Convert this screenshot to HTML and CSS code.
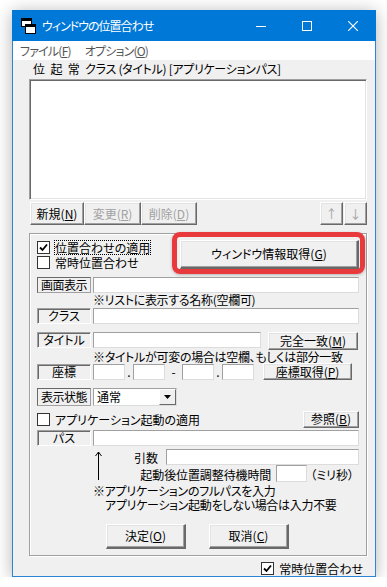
FILE: index.html
```html
<!DOCTYPE html>
<html lang="ja">
<head>
<meta charset="UTF-8">
<meta name="viewport" content="width=device-width, initial-scale=1.0">
<title>ウィンドウの位置合わせ</title>
<link rel="stylesheet" href="styles.css">
</head>
<body>
<div class="window">
    <div class="titlebar">
        <svg class="app-icon" width="15" height="16" viewBox="0 0 15 16">
            <rect x="0.5" y="0.5" width="10" height="8" fill="#fff" stroke="#000"/>
            <rect x="1" y="1" width="9" height="2" fill="#000"/>
            <rect x="4.5" y="6.5" width="10" height="9" fill="#fff" stroke="#000"/>
            <rect x="5" y="7" width="9" height="2" fill="#000"/>
        </svg>
        <span class="title">ウィンドウの位置合わせ</span>
        <div class="caption">
            <span class="cap-btn">
                <svg width="10" height="10" viewBox="0 0 10 10"><path d="M0 5.5h10" stroke="#fff" stroke-width="1"/></svg>
            </span>
            <span class="cap-btn">
                <svg width="10" height="10" viewBox="0 0 10 10"><rect x="0.5" y="0.5" width="9" height="9" fill="none" stroke="#fff"/></svg>
            </span>
            <span class="cap-btn">
                <svg width="10" height="10" viewBox="0 0 10 10"><path d="M0 0L10 10M10 0L0 10" stroke="#fff" stroke-width="1.1"/></svg>
            </span>
        </div>
    </div>

    <div class="menubar">
        <span class="menu-item">ファイル(<u>F</u>)</span>
        <span class="menu-item">オプション(<u>O</u>)</span>
    </div>

    <div class="client">
        <div class="list-head">位&ensp;起&ensp;常&ensp;クラス (タイトル) [アプリケーションパス]</div>
        <div class="listbox"></div>

        <div class="list-btns">
            <button class="btn btn-new">新規(<u>N</u>)</button>
            <button class="btn btn-edit" disabled>変更(<u>R</u>)</button>
            <button class="btn btn-del" disabled>削除(<u>D</u>)</button>
            <span class="spacer"></span>
            <button class="btn btn-arrow" disabled>↑</button>
            <button class="btn btn-arrow" disabled>↓</button>
        </div>

        <div class="group">
            <div class="highlight"></div>

            <div class="row-top">
                <div class="checks">
                    <label class="check"><span class="box checked"><svg width="9" height="9" viewBox="0 0 9 9"><path d="M1 4.5L3.5 7L8 1.5" fill="none" stroke="#000" stroke-width="1.8"/></svg></span><span class="focus">位置合わせの適用</span></label>
                    <label class="check"><span class="box"></span><span>常時位置合わせ</span></label>
                </div>
                <button class="btn btn-get">ウィンドウ情報取得(<u>G</u>)</button>
            </div>

            <div class="row row-disp">
                <span class="lbl lbl-dark">画面表示</span>
                <span class="field grow"></span>
            </div>
            <div class="note">※リストに表示する名称(空欄可)</div>

            <div class="row row-class">
                <span class="lbl">クラス</span>
                <span class="field grow"></span>
            </div>

            <div class="row row-title">
                <span class="lbl">タイトル</span>
                <span class="field field-title"></span>
                <button class="btn btn-match">完全一致(<u>M</u>)</button>
            </div>
            <div class="note note-title">※タイトルが可変の場合は空欄、もしくは部分一致</div>

            <div class="row row-pos">
                <span class="lbl">座標</span>
                <span class="field field-num"></span>
                <span class="sep">.</span>
                <span class="field field-num"></span>
                <span class="sep sep-dash">-</span>
                <span class="field field-num"></span>
                <span class="sep">.</span>
                <span class="field field-num"></span>
                <button class="btn btn-pos">座標取得(<u>P</u>)</button>
            </div>

            <div class="row row-state">
                <span class="lbl lbl-dark">表示状態</span>
                <span class="combo">
                    <span class="combo-text">通常</span>
                    <span class="combo-drop"><svg width="7" height="4" viewBox="0 0 7 4"><path d="M0 0h7L3.5 4z" fill="#000"/></svg></span>
                </span>
            </div>

            <div class="row row-app">
                <label class="check"><span class="box"></span><span>アプリケーション起動の適用</span></label>
                <button class="btn btn-browse">参照(<u>B</u>)</button>
            </div>

            <div class="row row-path">
                <span class="lbl">パス</span>
                <span class="field grow"></span>
            </div>

            <div class="args">
                <svg class="up-arrow" width="9" height="30" viewBox="0 0 9 30">
                    <path d="M4.5 1V29" stroke="#000" stroke-width="1"/>
                    <path d="M1.5 5L4.5 1L7.5 5" fill="none" stroke="#000" stroke-width="1"/>
                </svg>
                <div class="args-rows">
                    <div class="row row-arg">
                        <span class="arg-lbl">引数</span>
                        <span class="field field-arg"></span>
                    </div>
                    <div class="row row-wait">
                        <span class="wait-lbl">起動後位置調整待機時間</span>
                        <span class="field field-wait"></span>
                        <span class="unit">（ミリ秒）</span>
                    </div>
                </div>
            </div>

            <div class="note note-path">※アプリケーションのフルパスを入力</div>
            <div class="note note-path2">アプリケーション起動をしない場合は入力不要</div>

            <div class="row-ok">
                <button class="btn btn-ok">決定(<u>O</u>)</button>
                <button class="btn btn-ok">取消(<u>C</u>)</button>
            </div>
        </div>

        <div class="footer">
            <label class="check"><span class="box checked"><svg width="9" height="9" viewBox="0 0 9 9"><path d="M1 4.5L3.5 7L8 1.5" fill="none" stroke="#000" stroke-width="1.8"/></svg></span><span>常時位置合わせ</span></label>
        </div>
    </div>
</div>
</body>
</html>
```

FILE: styles.css
```css
body {
    margin: 0;
    padding: 0;
    background-color: #fff;
    font-family: "Noto Sans CJK JP", sans-serif;
    font-size: 12px;
    color: #000;
    font-feature-settings: "palt";
}
u {
    text-decoration: underline;
    text-underline-offset: 1px;
}

/* ウィンドウ枠 */
.window {
    margin: 10px 0 0 12px;
    width: 364px;
    height: 567px;
    box-sizing: border-box;
    border: 1px solid #2b87d6;
    border-top: none;
    display: flex;
    flex-direction: column;
    background-color: #f0f0f0;
    box-shadow: 0 2px 16px rgba(0, 0, 0, 0.3);
}
.titlebar {
    height: 31px;
    margin: 0 -1px;
    background-color: #0078d7;
    display: flex;
    align-items: center;
    color: #fff;
}
.app-icon {
    margin-left: 9px;
    margin-top: 1px;
}
.title {
    margin-left: 6px;
    font-size: 12px;
    letter-spacing: -1px;
}
.caption {
    margin-left: auto;
    display: flex;
    height: 100%;
}
.cap-btn {
    width: 46px;
    display: flex;
    align-items: center;
    justify-content: center;
}
.menubar {
    height: 19px;
    background-color: #fff;
    display: flex;
    align-items: center;
    color: #555;
}
.menu-item {
    margin-left: 7px;
    margin-right: 7px;
    letter-spacing: -0.8px;
}

/* クライアント領域 */
.client {
    flex: 1;
    display: flex;
    flex-direction: column;
    padding: 0 8px 0 16px;
}
.list-head {
    height: 19px;
    line-height: 17px;
    padding-left: 4px;
    letter-spacing: -0.3px;
    white-space: pre;
}
.listbox {
    height: 121px;
    box-sizing: border-box;
    background-color: #fff;
    border: 1px solid;
    border-color: #a0a0a0 #fff #fff #a0a0a0;
    box-shadow: inset 1px 1px #696969, inset -1px -1px #e3e3e3;
}
.list-btns {
    display: flex;
    margin-top: 2px;
    height: 23px;
    padding-left: 1px;
}
.spacer {
    flex: 1;
}

/* ボタン */
.btn {
    font: inherit;
    color: #000;
    padding: 0;
    margin: 0;
    background-color: #f0f0f0;
    border: 1px solid;
    border-color: #fff #696969 #696969 #fff;
    box-shadow: inset -1px -1px #a0a0a0, inset 1px 1px #e3e3e3;
    box-sizing: border-box;
    line-height: 1;
    cursor: default;
}
.btn:disabled {
    color: #a0a0a0;
}
.btn-new { width: 54px; }
.btn-edit { width: 57px; }
.btn-del { width: 56px; }
.btn-arrow { width: 23px; margin-left: 1px; }

/* グループ */
.group {
    position: relative;
    margin-top: 8px;
    height: 323px;
    box-sizing: border-box;
    border: 1px solid #a0a0a0;
    box-shadow: inset 1px 1px #fff, 1px 1px #fff;
    padding: 0 7px 0 7px;
    display: flex;
    flex-direction: column;
}
.highlight {
    position: absolute;
    left: 142px;
    top: -2px;
    width: 193px;
    height: 42px;
    box-sizing: border-box;
    border: 5px solid #e8393c;
    border-radius: 8px;
    box-shadow: 0 1px 3px rgba(0, 0, 0, 0.25);
}
.row-top {
    margin-top: 6px;
    height: 30px;
    display: flex;
}
.checks {
    display: flex;
    flex-direction: column;
}
.check {
    display: flex;
    align-items: center;
    height: 15px;
}
.box {
    width: 13px;
    height: 13px;
    box-sizing: border-box;
    border: 1px solid #333;
    background-color: #fff;
    margin-right: 5px;
    display: flex;
    align-items: center;
    justify-content: center;
}
.focus {
    outline: 1px dotted #000;
    outline-offset: 0;
    line-height: 13px;
}
.btn-get {
    margin-left: auto;
    width: 179px;
    height: 29px;
    border-right-width: 2px;
    border-bottom-width: 2px;
}

.row {
    display: flex;
    align-items: flex-start;
}
.lbl {
    width: 54px;
    height: 16px;
    margin-right: 2px;
    box-sizing: border-box;
    border: 1px solid;
    border-color: #a0a0a0 #fff #fff #a0a0a0;
    box-shadow: inset 1px 1px #696969;
    text-align: center;
    line-height: 14px;
    flex-shrink: 0;
}
.lbl-dark {
    border-color: #696969 #a0a0a0 #a0a0a0 #696969;
    box-shadow: none;
    letter-spacing: -0.5px;
}
.field {
    height: 16px;
    box-sizing: border-box;
    background-color: #fff;
    border: 1px solid;
    border-color: #a0a0a0 #dcdcdc #dcdcdc #a0a0a0;
}
.grow {
    flex: 1;
}
.note {
    height: 14px;
    line-height: 14px;
    padding-left: 56px;
    letter-spacing: -0.3px;
}
.row-disp { margin-top: 7px; height: 16px; }
.row-class { margin-top: 1px; height: 16px; }
.row-title { margin-top: 8px; height: 18px; }
.field-title { width: 168px; }
.btn-match {
    margin-left: 7px;
    width: 90px;
    height: 18px;
}
.note-title { height: 13px; line-height: 13px; }
.row-pos { height: 18px; }
.row-pos .lbl, .row-pos .field { margin-top: 1px; }
.field-num { width: 32px; }
.sep {
    width: 8px;
    text-align: center;
    line-height: 18px;
}
.sep-dash {
    width: 17px;
}
.btn-pos {
    margin-left: 9px;
    width: 89px;
    height: 17px;
}
.row-state { margin-top: 7px; height: 18px; }
.row-state .lbl { height: 18px; line-height: 16px; }
.combo {
    width: 84px;
    height: 18px;
    box-sizing: border-box;
    background-color: #fff;
    border: 1px solid;
    border-color: #a0a0a0 #dcdcdc #dcdcdc #a0a0a0;
    display: flex;
}
.combo-text {
    flex: 1;
    padding-left: 3px;
    line-height: 16px;
}
.combo-drop {
    width: 17px;
    height: 16px;
    box-sizing: border-box;
    background-color: #f0f0f0;
    border: 1px solid;
    border-color: #fff #696969 #696969 #fff;
    display: flex;
    align-items: center;
    justify-content: center;
}
.row-app {
    margin-top: 4px;
    height: 18px;
    align-items: center;
}
.btn-browse {
    margin-left: auto;
    width: 56px;
    height: 17px;
}
.row-path { margin-top: 2px; height: 16px; }
.args {
    margin-top: 3px;
    display: flex;
}
.up-arrow {
    margin-left: 57px;
    margin-top: 2px;
}
.args-rows {
    flex: 1;
    display: flex;
    flex-direction: column;
}
.row-arg {
    height: 16px;
    justify-content: flex-end;
    align-items: center;
}
.arg-lbl {
    margin-right: 8px;
}
.field-arg { width: 193px; }
.row-wait {
    height: 17px;
    align-items: flex-end;
    justify-content: flex-end;
    padding-right: 5px;
}
.wait-lbl {
    margin-right: 5px;
    letter-spacing: -0.1px;
    line-height: 15px;
}
.field-wait {
    width: 31px;
    height: 17px;
}
.unit {
    margin-left: 3px;
    line-height: 15px;
}
.note-path { margin-top: 2px; }
.note-path2 { padding-left: 68px; }
.row-ok {
    margin-top: 12px;
    display: flex;
    padding-left: 69px;
    gap: 23px;
}
.btn-ok {
    width: 80px;
    height: 25px;
    border-right-width: 2px;
    border-bottom-width: 2px;
}
.footer {
    margin-top: 5px;
    display: flex;
    justify-content: flex-end;
    padding-right: 4px;
}
```
